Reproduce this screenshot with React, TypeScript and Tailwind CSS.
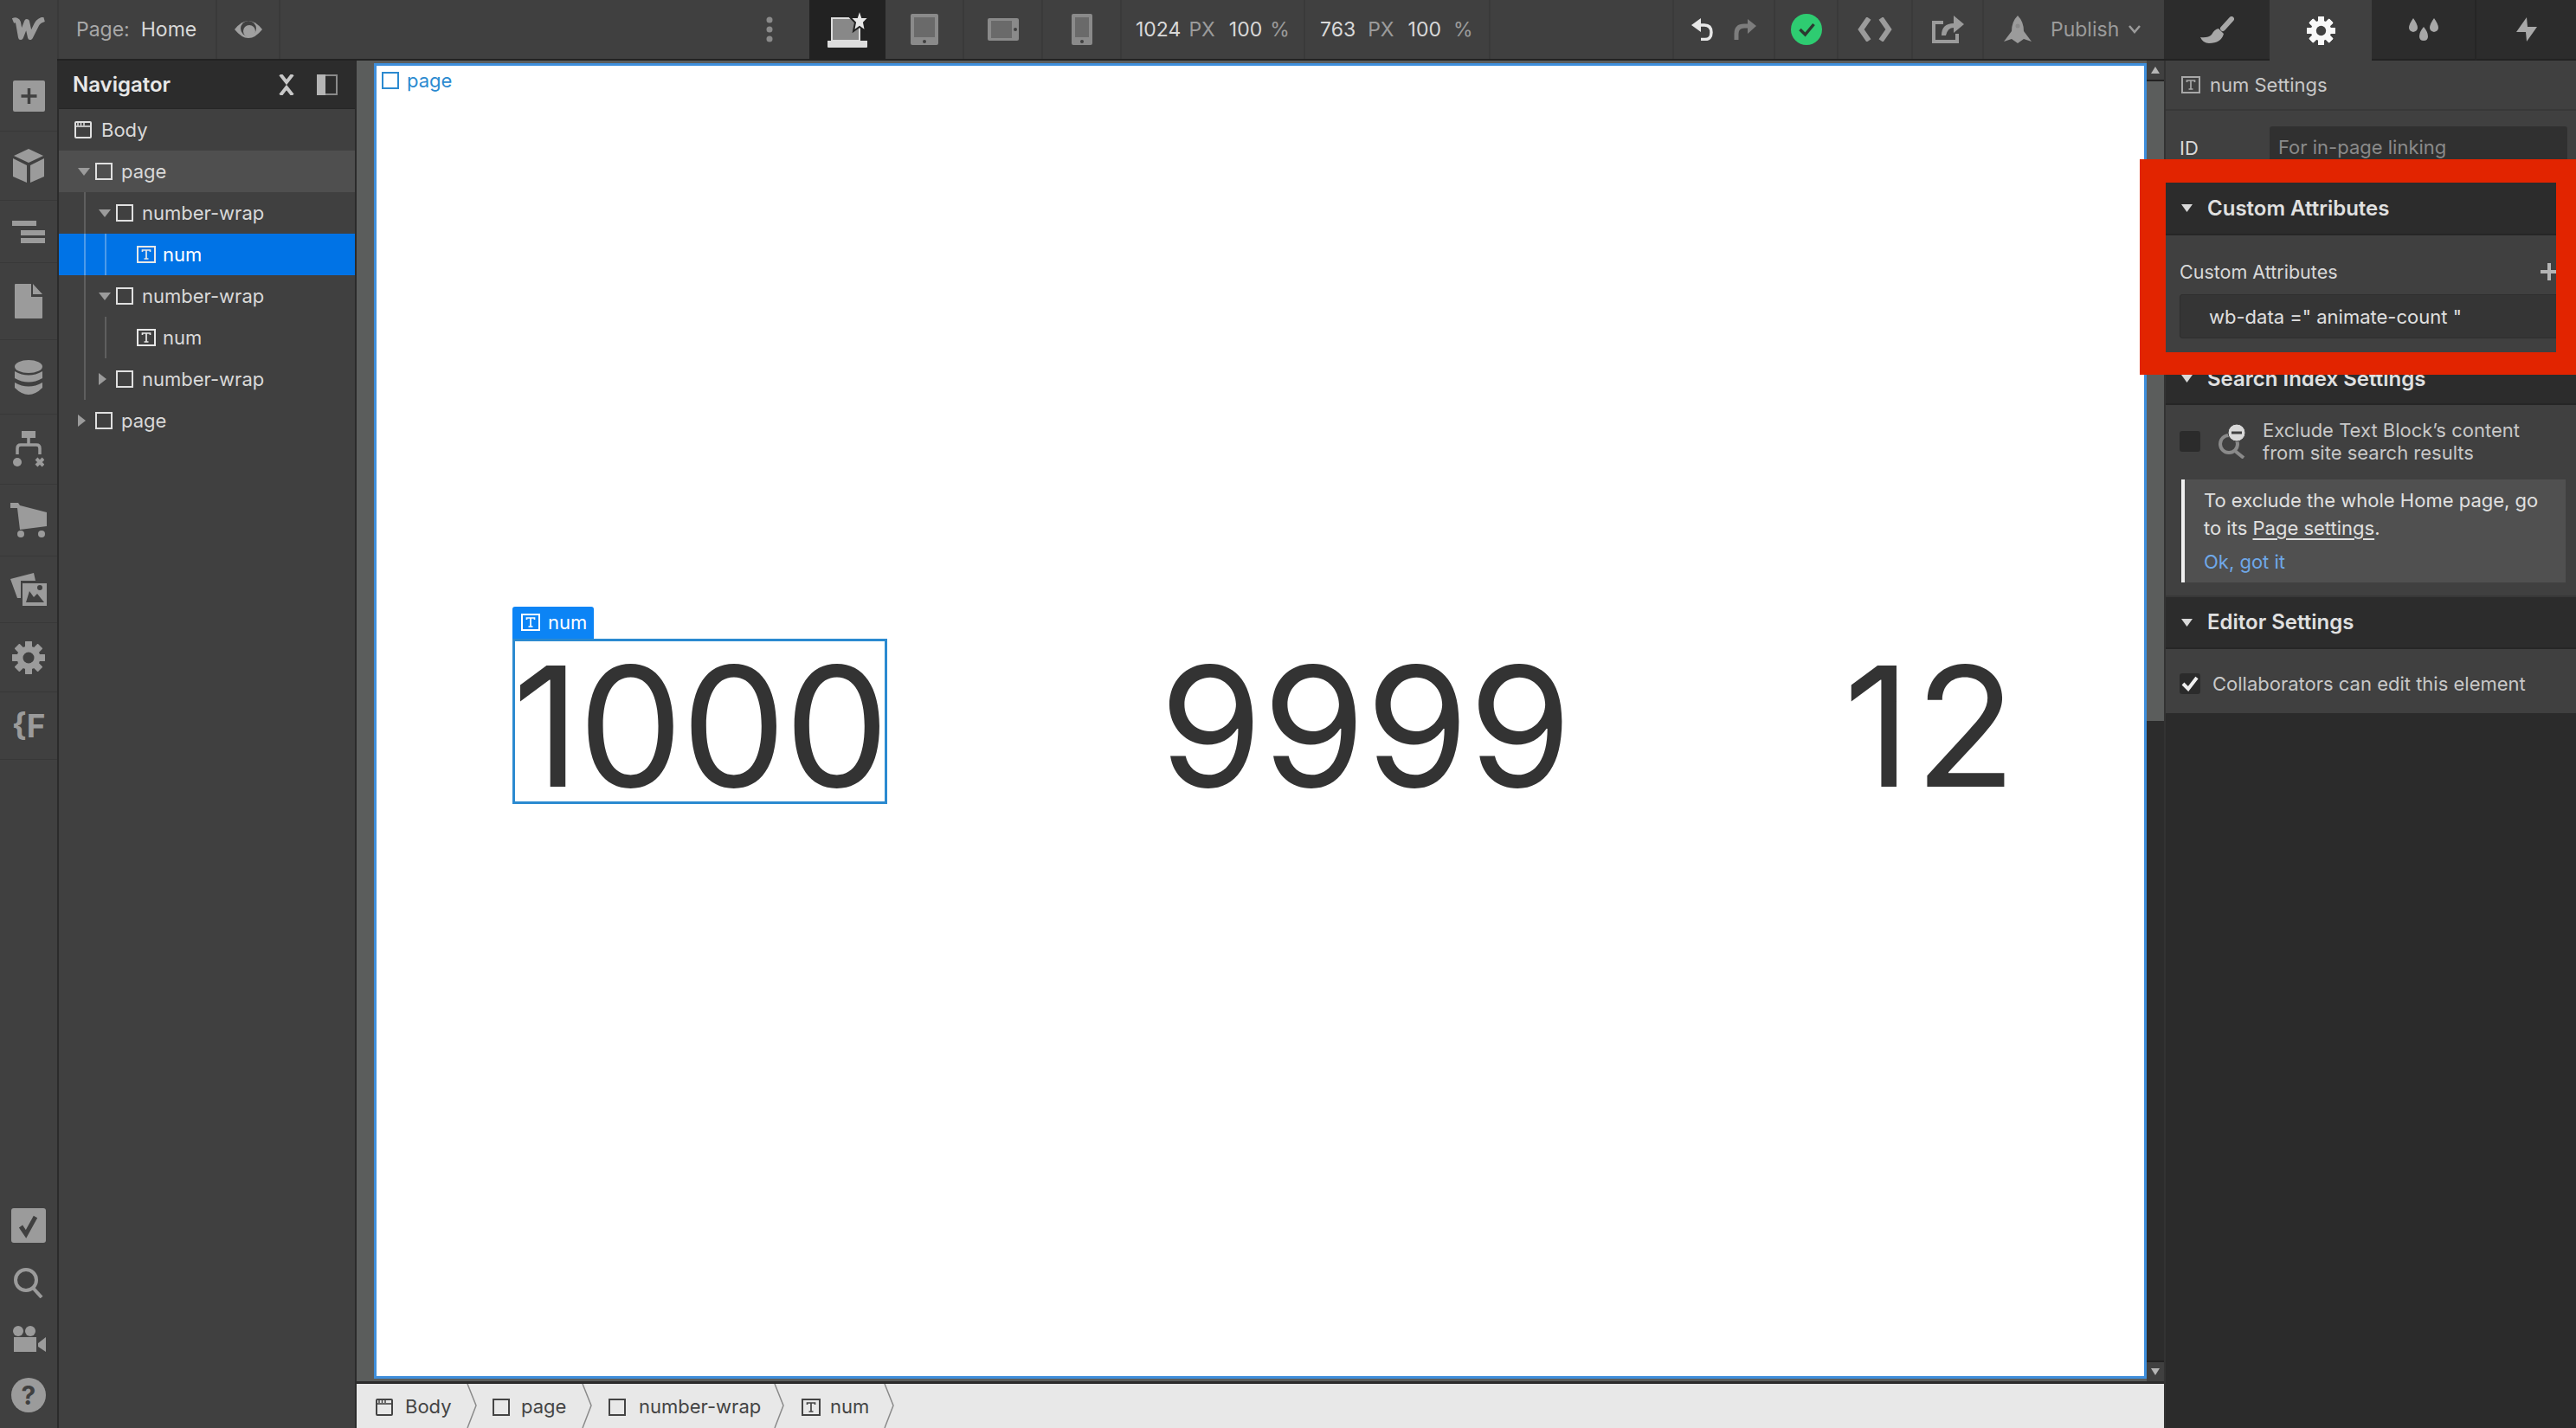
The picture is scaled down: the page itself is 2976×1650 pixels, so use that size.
import React from "react";

const ic = "#9b9b9b";

function Sq({ c = "currentColor" }: { c?: string }) {
  return (
    <svg width="20" height="20" viewBox="0 0 20 20" className="shrink-0">
      <rect x="1" y="1" width="18" height="18" fill="none" stroke={c} strokeWidth="2" />
    </svg>
  );
}

function TBox({ c = "currentColor" }: { c?: string }) {
  return (
    <svg width="22" height="20" viewBox="0 0 22 20" className="shrink-0">
      <rect x="1" y="1" width="20" height="18" fill="none" stroke={c} strokeWidth="2" />
      <path d="M6.5 7V5h9v2M11 5v10M8.5 15h5" fill="none" stroke={c} strokeWidth="1.7" />
    </svg>
  );
}

function BodyIcon({ c = "currentColor" }: { c?: string }) {
  return (
    <svg width="20" height="20" viewBox="0 0 20 20" className="shrink-0">
      <rect x="1" y="1" width="18" height="18" rx="1" fill="none" stroke={c} strokeWidth="2" />
      <path d="M1 6h18" stroke={c} strokeWidth="1.6" />
      <path d="M4 1.5v3.5M7.5 1.5v3.5M11 1.5v3.5" stroke={c} strokeWidth="1.5" />
    </svg>
  );
}

function Arrow({ open }: { open: boolean }) {
  return open ? (
    <svg width="14" height="9" viewBox="0 0 14 9" className="shrink-0">
      <path d="M0 0h14L7 9z" fill="#9b9b9b" />
    </svg>
  ) : (
    <svg width="9" height="14" viewBox="0 0 9 14" className="shrink-0">
      <path d="M0 0l9 7-9 7z" fill="#9b9b9b" />
    </svg>
  );
}

function GearIcon({ size, color, hole }: { size: number; color: string; hole: string }) {
  const teeth = [0, 45, 90, 135, 180, 225, 270, 315];
  return (
    <svg width={size} height={size} viewBox="0 0 38 38">
      {teeth.map((a) => (
        <rect key={a} x="15" y="0" width="8" height="38" rx="1" fill={color} transform={`rotate(${a} 19 19)`} />
      ))}
      <circle cx="19" cy="19" r="13.5" fill={color} />
      <circle cx="19" cy="19" r="6.5" fill={hole} />
    </svg>
  );
}

function SectionHead({ title, h = "h-[59px]" }: { title: string; h?: string }) {
  return (
    <div className={`${h} shrink-0 bg-[#2c2c2c] border-b-2 border-[#262626] flex items-center pl-[18px] gap-[17px] text-[#e0e0e0] text-[24px] font-semibold`}>
      <svg width="13" height="9" viewBox="0 0 13 9" className="shrink-0">
        <path d="M0 0h13L6.5 9z" fill="#d9d9d9" />
      </svg>
      {title}
    </div>
  );
}

type Row = { label: string; pad: number; kind: "body" | "box" | "text"; arrow?: "open" | "closed"; bg?: string; text?: string; guides?: number[]; guide?: string };

const rows: Row[] = [
  { label: "Body", pad: 18, kind: "body" },
  { label: "page", pad: 22, kind: "box", arrow: "open", bg: "bg-[#4f4f4f]" },
  { label: "number-wrap", pad: 46, kind: "box", arrow: "open", guides: [29] },
  { label: "num", pad: 90, kind: "text", bg: "bg-[#0073e6]", text: "text-white", guides: [29, 53], guide: "bg-[#4d9bea]" },
  { label: "number-wrap", pad: 46, kind: "box", arrow: "open", guides: [29] },
  { label: "num", pad: 90, kind: "text", guides: [29, 53] },
  { label: "number-wrap", pad: 46, kind: "box", arrow: "closed", guides: [29] },
  { label: "page", pad: 22, kind: "box", arrow: "closed" },
];

function TreeRow({ r }: { r: Row }) {
  return (
    <div className={`relative h-[48px] flex items-center text-[22px] ${r.bg ?? ""} ${r.text ?? "text-[#d9d9d9]"}`} style={{ paddingLeft: r.pad }}>
      {r.guides?.map((g) => (
        <span key={g} className={`absolute inset-y-0 w-[2px] ${r.guide ?? "bg-[#5e5e5e]"}`} style={{ left: g }} />
      ))}
      {r.arrow && (
        <span className="w-[20px] shrink-0 flex">
          <Arrow open={r.arrow === "open"} />
        </span>
      )}
      {r.kind === "body" && <BodyIcon c="#e0e0e0" />}
      {r.kind === "box" && <Sq c="#e0e0e0" />}
      {r.kind === "text" && <TBox c="#e8e8e8" />}
      <span className={r.kind === "text" ? "ml-[8px]" : r.kind === "body" ? "ml-[11px]" : "ml-[10px]"}>{r.label}</span>
    </div>
  );
}

const railTop: [number, React.ReactNode][] = [
  [82, <svg width="37" height="36" viewBox="0 0 37 36"><rect width="37" height="36" rx="2" fill={ic} /><path d="M18.5 9v18M9.5 18h18" stroke="#404040" strokeWidth="3.5" /></svg>],
  [80, <svg width="36" height="39" viewBox="0 0 36 39"><path d="M18 0l17 8-17 8L1 8zM0 11l16 8v20L0 32zM36 11l-16 8v20l16-7z" fill={ic} /></svg>],
  [72, <svg width="38" height="26" viewBox="0 0 38 26"><path d="M0 0h28v6H0zM10 11h28v6H10zM10 20h28v6H10z" fill={ic} /></svg>],
  [89, <svg width="32" height="40" viewBox="0 0 32 40"><path d="M1 0h18v15h13v24q0 1-1 1H1q-1 0-1-1V1q0-1 1-1zM21 0l11 12H21z" fill={ic} /></svg>],
  [86, <svg width="32" height="40" viewBox="0 0 32 40"><ellipse cx="16" cy="7.5" rx="16" ry="7.5" fill={ic} /><path d="M0 13q16 9 32 0v8q-16 9-32 0zM0 26q16 9 32 0v6q-16 16-32 0z" fill={ic} /></svg>],
  [81, <svg width="36" height="42" viewBox="0 0 36 42"><path d="M10 0h16v8H10z" fill={ic} /><path d="M18 8v7M5 27v-7q0-4 4-4h18q4 0 4 4v7" fill="none" stroke={ic} strokeWidth="3.5" /><circle cx="5" cy="36" r="5" fill={ic} /><path d="M27 32l8 8M35 32l-8 8" stroke={ic} strokeWidth="4" /></svg>],
  [83, <svg width="42" height="40" viewBox="0 0 42 40"><path d="M0 0h9l2 3 31 8v16l-31 4L8 6H0z" fill={ic} /><circle cx="12" cy="36" r="4" fill={ic} /><circle cx="36" cy="36" r="4" fill={ic} /></svg>],
  [77, <svg width="42" height="38" viewBox="0 0 42 38"><path d="M0 7l27-7 2 9H12v20h-4z" fill={ic} /><path fillRule="evenodd" d="M14 12h28v26H14z M18 34h21l-8-10-4 4-5-7z M34 14a3 3 0 100 6 3 3 0 000-6z" fill={ic} /></svg>],
  [80, <GearIcon size={38} color={ic} hole="#404040" />],
  [78, <span className="text-[37px] font-bold text-[#9b9b9b] leading-none">{"{F"}</span>],
];

function Rail() {
  return (
    <div className="w-[68px] shrink-0 bg-[#404040] border-r-2 border-[#2b2b2b] flex flex-col">
      {railTop.map(([h, icon], i) => (
        <div key={i} className="flex items-center justify-center border-b border-[#383838] last:border-b-0" style={{ height: h }}>
          {icon}
        </div>
      ))}
      <div className="mt-auto flex flex-col items-center pb-[18px]">
        <svg width="40" height="40" viewBox="0 0 40 40"><rect width="40" height="40" rx="3" fill={ic} /><path d="M11 21l6 9 11-20" fill="none" stroke="#404040" strokeWidth="5" /></svg>
        <svg className="mt-[28px]" width="36" height="36" viewBox="0 0 36 36"><circle cx="15" cy="15" r="12" fill="none" stroke={ic} strokeWidth="4" /><path d="M23 24l10 11" stroke={ic} strokeWidth="4" /></svg>
        <svg className="mt-[32px]" width="40" height="30" viewBox="0 0 40 30"><circle cx="8" cy="6" r="6" fill={ic} /><circle cx="22" cy="6" r="6" fill={ic} /><path d="M3 13h26v17H3zM31 20l9-7v17l-9-6z" fill={ic} /></svg>
        <span className="mt-[30px] w-[40px] h-[40px] rounded-full bg-[#9b9b9b] text-[#404040] text-[30px] font-bold flex items-center justify-center leading-none">?</span>
      </div>
    </div>
  );
}

function Navigator() {
  return (
    <div className="w-[344px] shrink-0 bg-[#404040] border-r-2 border-[#2b2b2b] flex flex-col">
      <div className="h-[55px] bg-[#2c2c2c] flex items-center px-[16px] text-[#e8e8e8] text-[24px] font-semibold">
        Navigator
        <svg className="ml-auto" width="18" height="24" viewBox="0 0 18 24"><path d="M2 0l7 9 7-9M2 24l7-9 7 9" fill="none" stroke="#c8c8c8" strokeWidth="4" /></svg>
        <svg className="ml-[26px] mr-[4px]" width="24" height="24" viewBox="0 0 24 24"><path d="M0 0h10v24H0z" fill="#b5b5b5" /><path d="M10 1h13v22H10" fill="none" stroke="#8a8a8a" strokeWidth="2" /></svg>
      </div>
      <div className="border-t border-[#262626]">
        {rows.map((r, i) => (
          <TreeRow key={i} r={r} />
        ))}
      </div>
    </div>
  );
}

function TopBar() {
  const deviceCell = "w-[91px] h-full flex items-center justify-center border-r-2 border-[#3a3a3a]";
  return (
    <div className="h-[70px] shrink-0 flex bg-[#404040]">
      <div className="flex-1 flex h-[68px] relative">
        <div className="w-[68px] flex items-center justify-center border-r-2 border-[#3a3a3a]">
          <svg width="40" height="28" viewBox="0 0 40 28"><path d="M2 4q5-2 6 2l3 17 7-18 4 18 7-14q2-5 9-7" fill="none" stroke="#9b9b9b" strokeWidth="6" strokeLinejoin="round" /></svg>
        </div>
        <div className="w-[183px] flex items-center pl-[20px] gap-[13px] text-[23px] border-r-2 border-[#3a3a3a]">
          <span className="text-[#a8a8a8]">Page:</span>
          <span className="text-[#d9d9d9]">Home</span>
        </div>
        <div className="w-[73px] flex items-center justify-center border-r-2 border-[#3a3a3a]">
          <svg width="32" height="24" viewBox="0 0 32 24"><path d="M0 12Q16-8 32 12 16 32 0 12z" fill="#a0a0a0" /><circle cx="16" cy="11" r="9" fill="#404040" /><circle cx="17" cy="14" r="7" fill="#a0a0a0" /></svg>
        </div>
        <div className="w-[611px] flex items-center justify-end pr-[42px]">
          <svg width="8" height="30" viewBox="0 0 8 30"><circle cx="4" cy="4" r="3.5" fill="#8a8a8a" /><circle cx="4" cy="15" r="3.5" fill="#8a8a8a" /><circle cx="4" cy="26" r="3.5" fill="#8a8a8a" /></svg>
        </div>
        <div className="w-[88px] bg-[#222222] flex items-center justify-center">
          <svg width="52" height="46" viewBox="0 0 52 46">
            <path d="M8 10h32v26H8z" fill="#888888" stroke="#dddddd" strokeWidth="2" />
            <path d="M3 36h46v7q0 1-1 1H4q-1 0-1-1z" fill="#dddddd" />
            <path d="M40 0l3 9 8 0-6 6 2 10-7-5-7 5 2-10-6-6 8 0z" fill="#e8e8e8" stroke="#222222" strokeWidth="2" />
          </svg>
        </div>
        <div className={deviceCell}>
          <svg width="32" height="36" viewBox="0 0 32 36"><rect width="32" height="36" rx="2" fill="#8a8a8a" /><rect x="4" y="4" width="24" height="23" fill="#6a6a6a" /><circle cx="16" cy="32" r="2" fill="#404040" /></svg>
        </div>
        <div className={deviceCell}>
          <svg width="36" height="26" viewBox="0 0 36 26"><rect width="36" height="26" rx="2" fill="#8a8a8a" /><rect x="4" y="3" width="24" height="20" fill="#6a6a6a" /><circle cx="32" cy="13" r="2" fill="#404040" /></svg>
        </div>
        <div className={deviceCell}>
          <svg width="24" height="36" viewBox="0 0 24 36"><rect width="24" height="36" rx="2" fill="#8a8a8a" /><rect x="4" y="4" width="16" height="23" fill="#6a6a6a" /><circle cx="12" cy="32" r="2" fill="#404040" /></svg>
        </div>
        <div className="w-[212px] flex items-center pl-[16px] text-[23px] border-r-2 border-[#3a3a3a]">
          <span className="text-[#d9d9d9]">1024</span>
          <span className="text-[#9b9b9b] ml-[9px]">PX</span>
          <span className="text-[#d9d9d9] ml-[16px]">100</span>
          <span className="text-[#9b9b9b] ml-[9px]">%</span>
        </div>
        <div className="w-[214px] flex items-center pl-[17px] text-[23px] border-r-2 border-[#3a3a3a]">
          <span className="text-[#d9d9d9]">763</span>
          <span className="text-[#9b9b9b] ml-[14px]">PX</span>
          <span className="text-[#d9d9d9] ml-[16px]">100</span>
          <span className="text-[#9b9b9b] ml-[14px]">%</span>
        </div>
        <div className="w-[212px] border-r-2 border-[#3a3a3a]" />
        <div className="w-[117px] flex items-center justify-center gap-[24px] border-r-2 border-[#3a3a3a]">
          <svg width="25" height="26" viewBox="0 0 25 26"><path d="M0 8l11-8v16z" fill="#e8e8e8" /><path d="M9 8h6q8 0 8 8.500T15 24.500h-4" fill="none" stroke="#e8e8e8" strokeWidth="3.5" /></svg>
          <svg width="26" height="26" viewBox="0 0 26 26"><path d="M26 9l-10-8v17z" fill="#7d7d7d" /><path d="M18 9h-6q-9 0-9 9v7" fill="none" stroke="#7d7d7d" strokeWidth="5" /></svg>
        </div>
        <div className="w-[73px] flex items-center justify-center border-r-2 border-[#3a3a3a]">
          <svg width="36" height="36" viewBox="0 0 36 36"><circle cx="18" cy="18" r="18" fill="#2ecc71" /><path d="M10.500 18l6 6 10-12" fill="none" stroke="#2b3a30" strokeWidth="3.500" /></svg>
        </div>
        <div className="w-[86px] flex items-center justify-center border-r-2 border-[#3a3a3a]">
          <svg width="40" height="28" viewBox="0 0 40 28"><path d="M13 1L4 14l9 13M27 1l9 13-9 13" fill="none" stroke="#9b9b9b" strokeWidth="6" /></svg>
        </div>
        <div className="w-[82px] flex items-center justify-center border-r-2 border-[#3a3a3a]">
          <svg width="37" height="32" viewBox="0 0 37 32"><path d="M13 8H2v22h27V21" fill="none" stroke="#9b9b9b" strokeWidth="4" /><path d="M11 23q0-14 14-14V0l12 10-12 10v-6q-7 0-9 9z" fill="#9b9b9b" /></svg>
        </div>
        <div className="flex-1 flex items-center pl-[23px] text-[23px] text-[#9b9b9b]">
          <svg width="32" height="32" viewBox="0 0 32 32"><path d="M16 0q7 7 7 18l9 12-9-3-7 5-7-5-9 3 9-12Q9 7 16 0z" fill="#9b9b9b" /><circle cx="16" cy="12" r="2.500" fill="#8a8a8a" /></svg>
          <span className="ml-[22px]">Publish</span>
          <svg className="ml-[11px]" width="14" height="10" viewBox="0 0 14 10"><path d="M1 1l6 7 6-7" fill="none" stroke="#9b9b9b" strokeWidth="2.500" /></svg>
        </div>
        <div className="absolute left-[66px] right-0 top-[68px] h-[2px] bg-[#222222]" />
      </div>
      <div className="w-[476px] shrink-0 flex relative z-10">
        <div className="w-[122px] bg-[#2c2c2c] flex items-center justify-center border-b-2 border-[#222222]">
          <svg width="39" height="31" viewBox="0 0 39 31"><path d="M36 3L26 14" stroke="#a8a8a8" strokeWidth="6" strokeLinecap="round" /><path d="M21 14l6 6q-3 11-17 11Q3 31 0 24q9 1 13-3 3-6 8-7z" fill="#a8a8a8" /></svg>
        </div>
        <div className="w-[118px] bg-[#404040] flex items-center justify-center">
          <GearIcon size={33} color="#f8f8f8" hole="#404040" />
        </div>
        <div className="w-[121px] bg-[#2c2c2c] flex items-center justify-center border-b-2 border-[#222222] border-r-2 border-r-[#262626]">
          <svg width="34" height="26" viewBox="0 0 34 26"><path d="M5 0q5 7 5 11t-5 5q-5-1-5-5T5 0zM29 0q5 7 5 11t-5 5q-5-1-5-5t5-11zM17 10q5 6 5 11t-5 5q-5 0-5-5t5-11z" fill="#a8a8a8" /></svg>
        </div>
        <div className="flex-1 bg-[#2c2c2c] flex items-center justify-center border-b-2 border-[#222222]">
          <svg width="24" height="28" viewBox="0 0 24 28"><path d="M12 0L0 17h11l1 11 12-17H13z" fill="#a8a8a8" /></svg>
        </div>
      </div>
    </div>
  );
}

function NumberBox({ value, selected, cls }: { value: string; selected?: boolean; cls: string }) {
  return (
    <div className={`relative h-[191px] pt-[12px] flex items-center text-[192px] leading-[150px] text-[#333333] ${cls} ${selected ? "outline-[3px] outline-[#2b8ad0] -outline-offset-[3px]" : ""}`}>
      {selected && (
        <div className="absolute left-0 -top-[37px] h-[37px] pl-[10px] pr-[8px] bg-[#0c84f5] rounded-t-[3px] flex items-center gap-[9px] text-white text-[22px] leading-normal tracking-normal">
          <TBox c="#ffffff" />
          num
        </div>
      )}
      {value}
    </div>
  );
}

function Canvas() {
  return (
    <div className="flex-1 min-h-0 flex">
      <div className="flex-1 flex bg-[#5b5d5c] pl-[20px] pt-[3px] pb-[3px]">
        <div className="relative flex-1 bg-white border-[3px] border-[#3f8fdc] flex justify-around items-center">
          <div className="absolute left-[6px] top-[3px] h-[28px] flex items-center gap-[9px] text-[#2b8ad0] text-[22px]">
            <Sq c="#2b8ad0" />
            page
          </div>
          <NumberBox value="1000" selected cls="tracking-[-2px]" />
          <NumberBox value="9999" cls="tracking-normal" />
          <NumberBox value="12" cls="tracking-[4px] -mr-[13px]" />
        </div>
      </div>
      <div className="w-[20px] shrink-0 bg-[#2c2c2c] flex flex-col">
        <div className="h-[24px] bg-[#404040] border-b-2 border-[#222222] flex items-center justify-center">
          <svg width="10" height="8" viewBox="0 0 10 8"><path d="M5 0l5 8H0z" fill="#b5b5b5" /></svg>
        </div>
        <div className="h-[739px] bg-[#5b5d5c]" />
        <div className="flex-1" />
        <div className="h-[24px] bg-[#404040] border-t-2 border-[#222222] flex items-center justify-center">
          <svg width="10" height="8" viewBox="0 0 10 8"><path d="M5 8l5-8H0z" fill="#b5b5b5" /></svg>
        </div>
      </div>
    </div>
  );
}

const crumbs: { label: string; kind: "body" | "box" | "text"; w: number; pl: number; gap: number }[] = [
  { label: "Body", kind: "body", w: 139, pl: 22, gap: 14 },
  { label: "page", kind: "box", w: 133, pl: 18, gap: 13 },
  { label: "number-wrap", kind: "box", w: 222, pl: 19, gap: 15 },
  { label: "num", kind: "text", w: 127, pl: 20, gap: 11 },
];

function Breadcrumb() {
  return (
    <div className="h-[54px] shrink-0 bg-[#e8e8e8] border-t-[3px] border-[#2b2b2b] flex text-[#444444] text-[22px]">
      {crumbs.map((c, i) => (
        <div key={i} className="relative flex items-center pt-[2px]" style={{ width: c.w, paddingLeft: c.pl, gap: c.gap }}>
          {c.kind === "body" && <BodyIcon />}
          {c.kind === "box" && <Sq />}
          {c.kind === "text" && <TBox />}
          {c.label}
          <svg className="absolute right-0 top-0" width="12" height="51" viewBox="0 0 12 51"><path d="M1 0l10 25L1 51" fill="none" stroke="#8a8a8a" strokeWidth="1.5" /></svg>
        </div>
      ))}
    </div>
  );
}

function Settings() {
  return (
    <div className="relative w-[476px] shrink-0 bg-[#2b2b2b] text-[#d9d9d9] text-[22px] border-l-2 border-[#333333] flex flex-col">
      <div className="h-[58px] shrink-0 bg-[#404040] flex items-center pl-[18px] gap-[11px] border-b-2 border-[#383838] text-[#c8c8c8]">
        <TBox c="#a8a8a8" />
        num Settings
      </div>
      <div className="h-[83px] shrink-0 bg-[#404040] pt-[18px] pl-[16px] pr-[10px] flex items-start">
        <span className="w-[104px] mt-[9px] shrink-0">ID</span>
        <div className="flex-1 h-[48px] bg-[#303030] rounded-[3px] px-[10px] flex items-center text-[#8a8a8a]">For in-page linking</div>
      </div>
      <SectionHead title="Custom Attributes" h="h-[61px]" />
      <div className="h-[137px] shrink-0 bg-[#404040] pl-[16px] pt-[28px]">
        <div className="flex items-center justify-between h-[28px] text-[21.5px]">
          <span>Custom Attributes</span>
          <svg className="mr-[21px]" width="20" height="20" viewBox="0 0 20 20"><path d="M10 0v20M0 10h20" stroke="#b5b5b5" strokeWidth="4" /></svg>
        </div>
        <div className="mt-[12px] h-[51px] pt-[2px] bg-[#353535] border border-[#2e2e2e] rounded-[3px] pl-[33px] flex items-center text-[#e0e0e0]">wb-data =" animate-count "</div>
      </div>
      <SectionHead title="Search Index Settings" />
      <div className="h-[222px] shrink-0 bg-[#404040] border-b-2 border-[#383838] pl-[16px] pt-[16px]">
        <div className="flex items-center">
          <span className="w-[24px] h-[24px] bg-[#2b2b2b] rounded-[3px] shrink-0" />
          <svg className="ml-[20px] shrink-0" width="34" height="40" viewBox="0 0 34 40">
            <circle cx="13" cy="23" r="10" fill="none" stroke="#8a8a8a" strokeWidth="4" />
            <path d="M20 31l10 8" stroke="#8a8a8a" strokeWidth="4" />
            <circle cx="22" cy="10" r="10" fill="#d9d9d9" stroke="#404040" strokeWidth="1" />
            <path d="M16 10h12" stroke="#404040" strokeWidth="3" />
          </svg>
          <div className="ml-[18px] leading-[26px] text-[#c8c8c8]">
            Exclude Text Block’s content
            <br />
            from site search results
          </div>
        </div>
        <div className="mt-[18px] ml-[2px] h-[119px] w-[444px] bg-[#505050] border-l-[4px] border-[#f0f0f0] pl-[22px] pt-[8px] leading-[32px] text-[#e0e0e0]">
          To exclude the whole Home page, go
          <br />
          to its <span className="underline underline-offset-[4px]">Page settings</span>.
          <div className="text-[#6fa8e8] mt-[7px]">Ok, got it</div>
        </div>
      </div>
      <SectionHead title="Editor Settings" h="h-[60px]" />
      <div className="h-[76px] shrink-0 bg-[#404040] border-b-2 border-[#2b2b2b] pl-[16px] pt-[6px] flex items-center gap-[14px]">
        <span className="w-[24px] h-[24px] bg-[#2b2b2b] rounded-[3px] flex items-center justify-center shrink-0">
          <svg width="20" height="18" viewBox="0 0 20 18"><path d="M2 9l6 6 10-13" fill="none" stroke="#f0f0f0" strokeWidth="4" /></svg>
        </span>
        <span className="text-[#c8c8c8]">Collaborators can edit this element</span>
      </div>
      <div className="absolute -left-[30px] top-[114px] w-[506px] h-[249px] border-solid border-l-[30px] border-t-[27px] border-r-[25px] border-b-[26px] border-[#e22400]" />
    </div>
  );
}

export default function App() {
  return (
    <div className="w-[2976px] h-[1650px] flex flex-col overflow-hidden bg-[#404040] [font-family:Inter,sans-serif]">
      <TopBar />
      <div className="flex-1 min-h-0 flex">
        <Rail />
        <Navigator />
        <div className="flex-1 min-w-0 flex flex-col">
          <Canvas />
          <Breadcrumb />
        </div>
        <Settings />
      </div>
    </div>
  );
}
